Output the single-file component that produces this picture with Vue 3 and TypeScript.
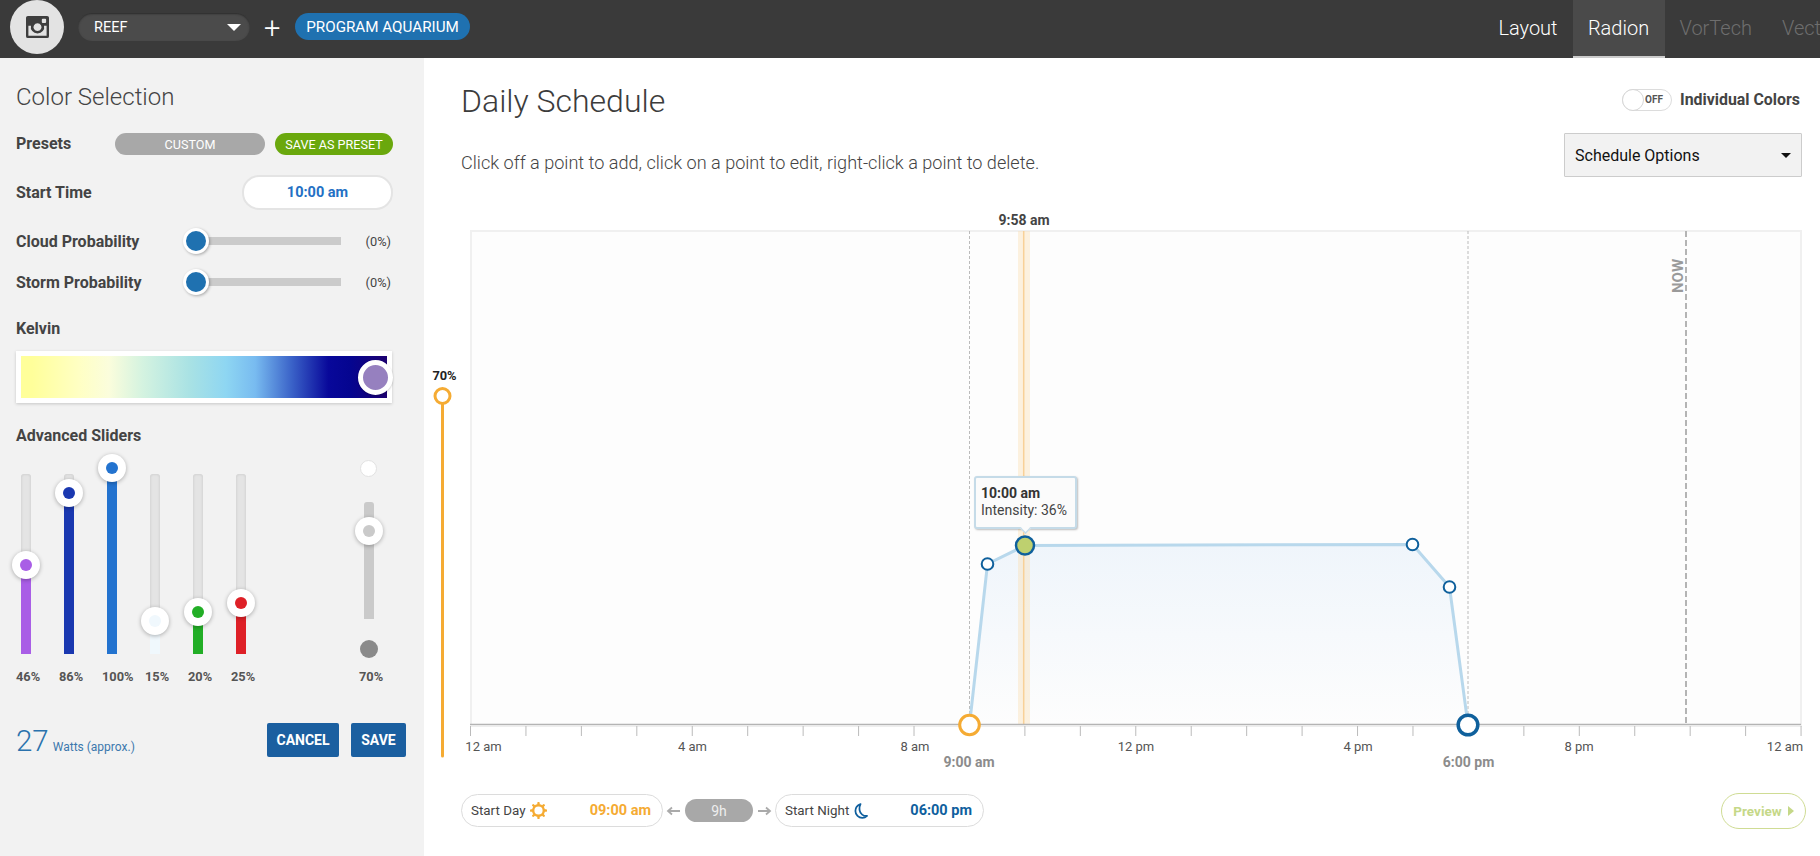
<script setup lang="ts">
interface Channel { pct: number; color: string; dot: string }
const channels: Channel[] = [
  { pct: 46, color: '#a95ee6', dot: '#a95ee6' },
  { pct: 86, color: '#1a38b0', dot: '#1a38b0' },
  { pct: 100, color: '#2373cf', dot: '#2373cf' },
  { pct: 15, color: '#f0f8fd', dot: '#f0f8fd' },
  { pct: 20, color: '#22ae26', dot: '#22ae26' },
  { pct: 25, color: '#de2027', dot: '#de2027' },
]
const hourX = (h: number): number => 470.5 + h * 55.44
const hours: number[] = Array.from({ length: 25 }, (_, i) => i)
const axisLabels = [
  { h: 0, t: '12 am', x: 483.5 },
  { h: 4, t: '4 am', x: 692.5 },
  { h: 8, t: '8 am', x: 915 },
  { h: 12, t: '12 pm', x: 1136 },
  { h: 16, t: '4 pm', x: 1358 },
  { h: 20, t: '8 pm', x: 1579 },
  { h: 24, t: '12 am', x: 1785 },
]
const pts: [number, number][] = [[969.5, 725], [987.5, 564], [1025, 545.5], [1412.5, 544.5], [1449.5, 587], [1468, 725]]
const line = pts.map(p => p.join(',')).join(' ')
const small = [pts[1], pts[3], pts[4]]
</script>

<template>
  <div class="page">
    <header class="top">
      <div class="logo">
        <svg width="23" height="22" viewBox="0 0 24 24" preserveAspectRatio="none">
          <path fill="#3e3e3e" fill-rule="evenodd" d="M2 0h20a2 2 0 0 1 2 2v20a2 2 0 0 1-2 2H2a2 2 0 0 1-2-2V2a2 2 0 0 1 2-2zM2.500 10.500V21.500H21.500V10.500H18.800A7 7 0 1 1 5.200 10.500zM17.500 3a1 1 0 0 0-1 1v2.500a1 1 0 0 0 1 1H20a1 1 0 0 0 1-1V4a1 1 0 0 0-1-1zM12 8a4.200 4.200 0 1 0 .01 0z" />
        </svg>
      </div>
      <div class="select"><span>REEF</span><i class="caret"></i></div>
      <span class="plus">+</span>
      <button class="prog">PROGRAM AQUARIUM</button>
      <nav class="tabs">
        <a class="tab">Layout</a>
        <a class="tab on">Radion</a>
        <a class="tab dim">VorTech</a>
        <a class="tab dim last">Vect</a>
      </nav>
    </header>

    <div class="body">
      <aside class="side">
        <h2 class="side-title">Color Selection</h2>
        <div class="row presets">
          <label>Presets</label>
          <span class="pill custom">CUSTOM</span>
          <span class="pill savep">SAVE AS PRESET</span>
        </div>
        <div class="row start">
          <label>Start Time</label>
          <span class="time">10:00 am</span>
        </div>
        <div class="row prob cloud">
          <label>Cloud Probability</label>
          <div class="htrack"><i class="hthumb"></i></div>
          <span class="pv">(0%)</span>
        </div>
        <div class="row prob storm">
          <label>Storm Probability</label>
          <div class="htrack"><i class="hthumb"></i></div>
          <span class="pv">(0%)</span>
        </div>
        <h3 class="kelvin-h">Kelvin</h3>
        <div class="kelvin">
          <div class="grad"></div>
          <i class="kthumb"></i>
        </div>
        <h3 class="adv-h">Advanced Sliders</h3>
        <div class="sliders">
          <div v-for="c in channels" :key="c.color" class="vs">
            <div class="vtrack">
              <div class="vfill" :style="{ height: 6 + c.pct * 1.8 + 'px', background: c.color }"></div>
              <div class="vthumb" :style="{ bottom: c.pct * 1.8 - 8 + 'px' }">
                <i :style="{ background: c.dot }"></i>
              </div>
            </div>
          </div>
          <div class="master">
            <i class="m-top"></i>
            <div class="mtrack"><div class="vthumb mthumb"><i></i></div></div>
            <i class="m-bot"></i>
          </div>
        </div>
        <div class="pcts">
          <span v-for="c in channels" :key="c.color">{{ c.pct }}%</span>
          <span class="mp">70%</span>
        </div>
        <div class="foot">
          <div class="watts"><b>27</b><span>Watts (approx.)</span></div>
          <button class="act cancel">CANCEL</button>
          <button class="act save">SAVE</button>
        </div>
      </aside>

      <main class="main">
        <div class="head">
          <h1>Daily Schedule</h1>
          <div class="indiv">
            <div class="toggle"><i></i><span>OFF</span></div>
            <strong>Individual Colors</strong>
          </div>
        </div>
        <div class="sub">
          <p>Click off a point to add, click on a point to edit, right-click a point to delete.</p>
          <div class="opts"><span>Schedule Options</span><i class="caret dark"></i></div>
        </div>

        <div class="chart">
          <svg width="1396" height="590" viewBox="424 205 1396 590" class="plot">
            <defs>
              <linearGradient id="area" x1="0" y1="0" x2="0" y2="1">
                <stop offset="0" stop-color="#eff5fb" />
                <stop offset="1" stop-color="#fdfdfd" />
              </linearGradient>
            </defs>
            <rect x="471" y="231" width="1330" height="495" fill="#fdfdfd" stroke="#f0f0f0" stroke-width="2" />
            <polygon :points="line" fill="url(#area)" />
            <line x1="969.500" y1="231" x2="969.500" y2="724" stroke="#bbb" stroke-dasharray="3 2" />
            <line x1="1468" y1="231" x2="1468" y2="724" stroke="#bbb" stroke-dasharray="3 2" />
            <rect x="1018" y="231" width="12" height="494" fill="#fbdcae" fill-opacity=".38" />
            <line x1="1023.700" y1="231" x2="1023.700" y2="725" stroke="#f8d198" stroke-width="1.500" />
            <polyline :points="line" fill="none" stroke="#b8d8ec" stroke-width="3" />
            <line x1="1686" y1="231" x2="1686" y2="724" stroke="#b4b4b4" stroke-width="2" stroke-dasharray="6 3" />
            <text x="1683" y="276" transform="rotate(-90 1683 276)" text-anchor="middle" class="now">NOW</text>
            <line x1="470" y1="724.500" x2="1801" y2="724.500" stroke="#b4b4b4" stroke-width="1.500" />
            <line x1="470" y1="726" x2="1801" y2="726" stroke="#eee" stroke-width="1.500" />
            <line v-for="h in hours" :key="h" :x1="hourX(h)" y1="726" :x2="hourX(h)" y2="736" stroke="#bbb" />
            <text v-for="a in axisLabels" :key="a.h" :x="a.x" y="750.500" text-anchor="middle" class="tick">{{ a.t }}</text>
            <text x="969" y="766.500" text-anchor="middle" class="edge">9:00 am</text>
            <text x="1468.500" y="766.500" text-anchor="middle" class="edge">6:00 pm</text>
            <text x="1024" y="225" text-anchor="middle" class="cur">9:58 am</text>
            <line x1="442.500" y1="396" x2="442.500" y2="756" stroke="#f5ab33" stroke-width="3" stroke-linecap="round" />
            <circle cx="442.500" cy="396" r="7.500" fill="#fff" stroke="#f5ab33" stroke-width="3" />
            <text x="444.500" y="380" text-anchor="middle" class="top70">70%</text>
            <circle v-for="(p, i) in small" :key="i" :cx="p[0]" :cy="p[1]" r="5.800" fill="#fff" stroke="#0f609c" stroke-width="2" />
            <circle cx="1025" cy="545.500" r="9" fill="#bed06f" stroke="#0f609c" stroke-width="2.500" />
            <circle cx="969.500" cy="725" r="9.800" fill="#fff" stroke="#f5ab33" stroke-width="3" />
            <circle cx="1468" cy="725" r="9.800" fill="#fff" stroke="#0f609c" stroke-width="3.500" />
          </svg>
          <div class="tip">
            <b>10:00 am</b>
            <span>Intensity: 36%</span>
          </div>
        </div>

        <div class="bottom">
          <div class="cap day">
            <span class="lbl">Start Day</span>
            <svg class="ico" width="17" height="17" viewBox="0 0 24 24">
              <circle cx="12" cy="12" r="7.500" fill="none" stroke="#f5ab33" stroke-width="3.400" />
              <path stroke="#f5ab33" stroke-width="3.400" stroke-linecap="round" d="M12 1.500v2M12 20.500v2M1.500 12h2M20.500 12h2M4.600 4.600l1.400 1.400M18 18l1.400 1.400M4.600 19.400L6 18M18 6l1.400-1.400" />
            </svg>
            <b>09:00 am</b>
          </div>
          <svg class="arr" width="22" height="12" viewBox="0 0 22 12">
            <path d="M17 6H5M9 2.500L5 6l4 3.500" fill="none" stroke="#aaa" stroke-width="1.800" />
          </svg>
          <span class="dur">9h</span>
          <svg class="arr" width="22" height="12" viewBox="0 0 22 12">
            <path d="M5 6h12M13 2.500L17 6l-4 3.500" fill="none" stroke="#aaa" stroke-width="1.800" />
          </svg>
          <div class="cap night">
            <span class="lbl">Start Night</span>
            <svg class="ico" width="15" height="16" viewBox="0 0 20 22">
              <path d="M10 1.500C5.500 3 3 6.800 3 11c0 5.500 4.500 9.500 9.500 9.500 2.500 0 4.800-1 6.500-2.700-5 .5-9.500-2.800-10.200-7.600C8.300 7 8.800 4 10 1.500z" fill="none" stroke="#0f5f9e" stroke-width="2.400" stroke-linejoin="round" />
            </svg>
            <b>06:00 pm</b>
          </div>
          <button class="preview">Preview<i></i></button>
        </div>
      </main>
    </div>
  </div>
</template>

<style>
html, body { margin: 0; padding: 0; overflow: hidden; background: #fff; }
</style>

<style scoped>
.page { width: 1820px; height: 856px; overflow: hidden; font-family: Roboto, "Liberation Sans", sans-serif; color: #444; }
button { font-family: inherit; border: 0; cursor: pointer; }
h1, h2, h3, p { margin: 0; }

.top { height: 58px; background: #3a3a3a; display: flex; align-items: flex-start; position: relative; }
.logo { width: 54px; height: 54px; border-radius: 50%; background: #e3e3e3; margin-left: 10px; display: flex; align-items: center; justify-content: center; }
.select { width: 172px; height: 28px; margin: 13px 0 0 14px; border-radius: 14px; background: #4b4b4b; box-shadow: inset 0 1px 2px #2a2a2a; display: flex; align-items: center; justify-content: space-between; padding: 0 9px 0 16px; box-sizing: border-box; color: #fff; font-size: 14.5px; }
.caret { width: 0; height: 0; border-left: 7px solid transparent; border-right: 7px solid transparent; border-top: 7px solid #fff; display: block; }
.caret.dark { border-left-width: 5px; border-right-width: 5px; border-top: 5px solid #111; }
.plus { color: #fff; font-size: 29px; font-weight: 300; margin: 11px 0 0 14px; line-height: 34px; width: 31px; }
.prog { width: 175px; height: 27px; margin-top: 13px; border-radius: 14px; background: #1f71b0; color: #fff; font-size: 15.2px; padding: 0; }
.tabs { margin-left: auto; margin-right: -1px; display: flex; height: 58px; }
.tab { font-size: 20px; font-weight: 300; color: #fff; line-height: 56px; padding: 0 15px; box-sizing: border-box; }
.tab.on { background: #4a4a4a; border-bottom: 2px solid #ccc; height: 58px; width: 92px; padding: 0; text-align: center; }
.tab.dim { color: #6e6e6e; }
.tab.last { padding: 0 0 0 15px; white-space: nowrap; }

.body { display: flex; height: 798px; }
.side { width: 424px; background: #f2f2f2; padding: 22px 0 0 16px; box-sizing: border-box; }
.side-title { font-size: 24px; font-weight: 300; line-height: 34px; color: #444; }
.row { display: flex; align-items: center; width: 377px; }
.row label, .kelvin-h, .adv-h { font-size: 16px; font-weight: 700; color: #444; }
.presets { height: 22px; margin-top: 19px; }
.presets label { width: 99px; margin-top: -2px; }
.pill { height: 22px; line-height: 23px; border-radius: 11px; color: #fff; font-size: 12.6px; text-align: center; }
.custom { width: 150px; background: #a8a8a8; margin-right: 10px; }
.savep { width: 118px; background: #6aa80d; }
.start { height: 35px; margin-top: 20px; justify-content: space-between; }
.time { width: 151px; height: 35px; box-sizing: border-box; border: 2px solid #e4e4e4; border-radius: 17px; background: #fff; color: #2370c4; font-weight: 700; font-size: 14.5px; text-align: center; line-height: 32px; }
.prob { height: 24px; }
.cloud { margin-top: 19px; }
.storm { margin-top: 17px; }
.prob label { width: 180px; }
.htrack { width: 145px; height: 8px; background: #cbcbcb; position: relative; }
.hthumb { position: absolute; left: -13px; top: -9px; width: 26px; height: 26px; border-radius: 50%; background: #1f71b0; border: 3px solid #fff; box-sizing: border-box; box-shadow: 1px 1px 3px rgba(0,0,0,.3); }
.pv { margin-left: auto; font-size: 12.8px; color: #444; padding-right: 2px; }
.kelvin-h { height: 20px; line-height: 20px; margin-top: 25px; }
.kelvin { width: 376px; height: 52px; margin-top: 12px; background: #fff; box-shadow: 0 1px 3px rgba(0,0,0,.18); padding: 5px; box-sizing: border-box; position: relative; }
.grad { height: 42px; width: 366px; background: linear-gradient(90deg, #ffff9a 3%, #ffffc4 16%, #fbfddc 24%, #d5f3e0 33%, #a9e2e4 46%, #8ed6f2 56%, #78bbf0 64%, #3a62c8 74%, #08089a 84%, #050590 90%, #1c0070 100%); }
.kthumb { position: absolute; left: 342px; top: 9px; width: 35px; height: 35px; box-sizing: border-box; border-radius: 50%; border: 5px solid #fff; background: #9680bf; box-shadow: 0 1px 2px rgba(0,0,0,.2); }
.adv-h { height: 20px; line-height: 20px; margin-top: 23px; }

.sliders { display: flex; margin-top: 28px; height: 180px; position: relative; }
.vs { width: 43px; }
.vtrack { width: 10px; height: 180px; margin-left: 5px; border-radius: 3px 3px 0 0; background: #e4e4e4; box-shadow: inset 0 0 3px rgba(0,0,0,.14); position: relative; }
.vfill { position: absolute; left: 0; right: 0; bottom: 0; }
.vthumb { position: absolute; left: -9px; width: 28px; height: 28px; border-radius: 50%; background: #fff; box-shadow: 0 1px 4px rgba(0,0,0,.3); display: flex; align-items: center; justify-content: center; }
.vthumb i { width: 12px; height: 12px; border-radius: 50%; display: block; }
.master { position: absolute; left: 340px; top: -14px; width: 28px; height: 190px; }
.m-top { position: absolute; left: 4px; top: 0; width: 17px; height: 17px; box-sizing: border-box; border-radius: 50%; background: #fff; border: 1px solid #e2e2e2; }
.mtrack { position: absolute; left: 8px; top: 42px; width: 10px; height: 117px; background: #cacaca; border-radius: 3px 3px 0 0; }
.mthumb { top: 15px; }
.mthumb i { background: #cacaca; }
.m-bot { position: absolute; left: 4px; top: 180px; width: 18px; height: 18px; border-radius: 50%; background: #8a8a8a; }
.pcts { height: 16px; margin-top: 15px; position: relative; display: flex; font-size: 12.8px; font-weight: 700; line-height: 16px; color: #555; }
.pcts span { width: 43px; text-align: center; box-sizing: border-box; padding-right: 19px; white-space: nowrap; }
.pcts .mp { position: absolute; left: 343px; width: 43px; }

.foot { display: flex; align-items: flex-end; margin-top: 38px; width: 390px; }
.watts { display: flex; align-items: baseline; color: #2a72ad; margin-right: auto; height: 34px; }
.watts b { font-size: 29.500px; font-weight: 300; line-height: 36px; }
.watts span { font-size: 12px; margin-left: 4px; color: #3c78ad; }
.act { height: 34px; border-radius: 2px; background: #1b5fa0; color: #fff; font-size: 14px; font-weight: 700; padding: 0; }
.cancel { width: 72px; margin-right: 12px; }
.save { width: 55px; }

.main { flex: 1; position: relative; min-width: 0; }
.head { height: 58px; padding: 14px 20px 0 37px; display: flex; justify-content: space-between; align-items: center; }
.head h1 { font-size: 32px; font-weight: 300; color: #3c3c3c; line-height: 40px; }
.indiv { display: flex; align-items: center; height: 22px; margin-top: -3px; }
.toggle { width: 50px; height: 22px; border: 1px solid #dcdcdc; border-radius: 11px; box-sizing: border-box; position: relative; background: #fff; }
.toggle i { position: absolute; left: -1px; top: -1px; width: 22px; height: 22px; box-sizing: border-box; border: 1px solid #d6d6d6; border-radius: 50%; background: #fff; }
.toggle span { position: absolute; left: 22px; top: 0; font-size: 10px; font-weight: 700; line-height: 20px; color: #555; }
.indiv strong { font-size: 15.9px; font-weight: 700; color: #444; margin-left: 8px; }
.sub { display: flex; justify-content: space-between; align-items: flex-start; height: 44px; margin-top: 3px; padding: 0 18px 0 37px; }
.sub p { font-size: 18.1px; font-weight: 300; line-height: 21px; margin-top: 19px; color: #444; }
.opts { width: 238px; height: 44px; box-sizing: border-box; border: 1px solid #ccc; border-radius: 1px; background: #f2f2f2; color: #111; font-size: 16px; display: flex; align-items: center; justify-content: space-between; padding: 0 10px 0 10px; }

.chart { position: relative; margin-top: 28px; height: 590px; }
.plot { display: block; }
.plot text { font-family: Roboto, "Liberation Sans", sans-serif; }
.now { font-size: 15px; font-weight: 700; fill: #9a9a9a; }
.tick { font-size: 13px; fill: #555; }
.edge { font-size: 14px; font-weight: 700; fill: #8c8c8c; }
.cur { font-size: 14px; font-weight: 700; fill: #444; }
.top70 { font-size: 12.8px; font-weight: 700; fill: #222; }
.tip { position: absolute; left: 550px; top: 271px; width: 103px; height: 53px; box-sizing: border-box; background: #fbfbfb; border: 2px solid #c5dbe8; border-radius: 3px; box-shadow: 1px 1px 2px rgba(0,0,0,.25); padding: 7px 0 0 5px; display: flex; flex-direction: column; font-size: 14px; line-height: 17px; color: #444; }
.tip b { color: #333; font-size: 14px; }
.tip::after { content: ""; position: absolute; left: 44px; bottom: -7px; width: 9px; height: 9px; background: #fbfbfb; transform: rotate(45deg) scale(.7); border-right: 2px solid #c5dbe8; border-bottom: 2px solid #c5dbe8; }

.bottom { position: absolute; left: 37px; top: 736px; width: 1345px; display: flex; align-items: center; height: 33px; }
.cap { height: 33px; box-sizing: border-box; border: 1px solid #dcdcdc; border-radius: 17px; display: flex; align-items: center; padding: 0 11px 0 9px; font-size: 13.4px; }
.day { width: 202px; }
.night { width: 209px; }
.lbl { color: #444; }
.ico { margin-left: 4px; }
.cap b { margin-left: auto; font-size: 14.5px; font-weight: 700; }
.day b { color: #f5ab33; }
.night b { color: #0f5f9e; }
.arr { display: block; flex: none; }
.dur { width: 68px; height: 23px; background: #a8a8a8; border-radius: 12px; color: #eee; font-size: 14px; text-align: center; line-height: 25px; }
.preview { position: absolute; left: 1260px; top: -1px; width: 85px; height: 36px; background: #fff; border: 1px solid #cfdc94; border-radius: 18px; color: #c5d888; font-weight: 700; font-size: 13.5px; display: flex; align-items: center; justify-content: center; gap: 6px; padding: 0; }
.preview i { width: 0; height: 0; border-left: 6px solid #c5d888; border-top: 5px solid transparent; border-bottom: 5px solid transparent; display: block; }
</style>
